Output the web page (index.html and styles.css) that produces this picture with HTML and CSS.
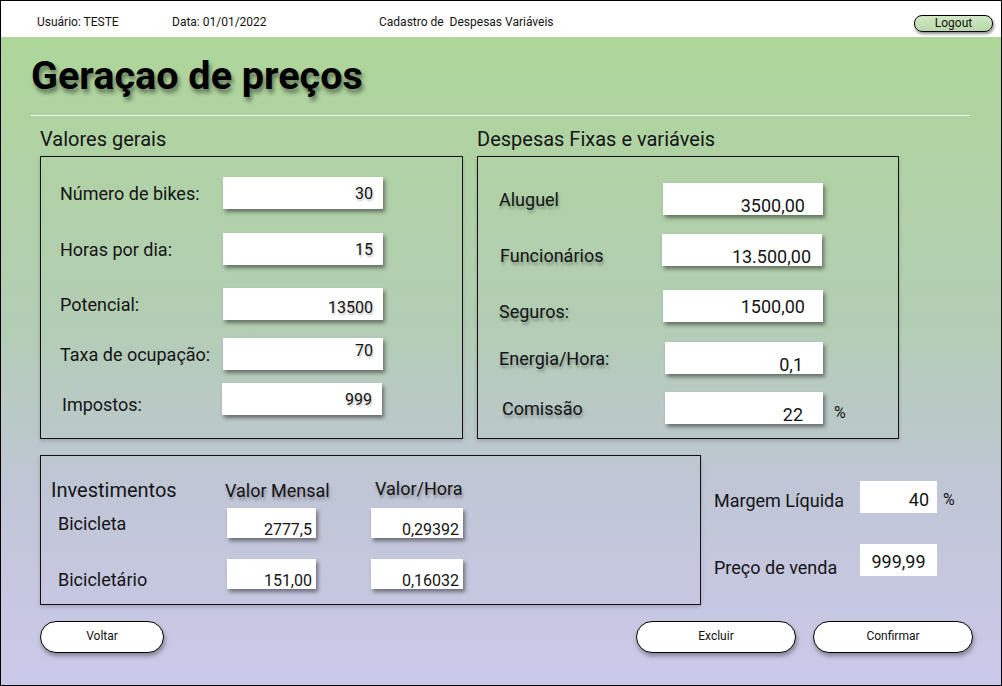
FILE: index.html
```html
<!DOCTYPE html>
<html lang="pt-BR">
<head>
<meta charset="utf-8">
<title>Geração de preços</title>
<link rel="stylesheet" href="styles.css">
</head>
<body>
<div class="app">
  <header class="topbar">
    <span class="user">Usuário: TESTE</span>
    <span class="date">Data: 01/01/2022</span>
    <span class="screen">Cadastro de&nbsp; Despesas Variáveis</span>
    <button class="logout">Logout</button>
  </header>
  <main class="content">
    <h1 class="title">Geraçao de preços</h1>
    <hr class="divider">
    <div class="cols">
      <section class="col col-gerais">
        <h2 class="col-title">Valores gerais</h2>
        <div class="panel panel-gerais">
          <div class="row"><span class="label">Número de bikes:</span><span class="field">30</span></div>
          <div class="row"><span class="label">Horas por dia:</span><span class="field">15</span></div>
          <div class="row"><span class="label">Potencial:</span><span class="field low">13500</span></div>
          <div class="row"><span class="label">Taxa de ocupação:</span><span class="field high">70</span></div>
          <div class="row"><span class="label lower">Impostos:</span><span class="field">999</span></div>
        </div>
      </section>
      <section class="col col-despesas">
        <h2 class="col-title">Despesas Fixas e variáveis</h2>
        <div class="panel panel-despesas">
          <div class="row"><span class="label">Aluguel</span><span class="field">3500,00</span></div>
          <div class="row"><span class="label lower">Funcionários</span><span class="field tight">13.500,00</span></div>
          <div class="row"><span class="label lower">Seguros:</span><span class="field mid">1500,00</span></div>
          <div class="row"><span class="label">Energia/Hora:</span><span class="field">0,1</span></div>
          <div class="row"><span class="label">Comissão</span><span class="field">22</span><span class="unit">%</span></div>
        </div>
      </section>
    </div>
    <div class="bottom">
      <div class="panel invest">
        <div class="invest-head">
          <span class="head-main">Investimentos</span>
          <span class="head-col head-mensal">Valor Mensal</span>
          <span class="head-col head-hora">Valor/Hora</span>
        </div>
        <div class="invest-row first">
          <span class="inv-label">Bicicleta</span>
          <span class="box box-mensal">2777,5</span>
          <span class="box">0,29392</span>
        </div>
        <div class="invest-row second">
          <span class="inv-label lower">Bicicletário</span>
          <span class="box box-mensal">151,00</span>
          <span class="box">0,16032</span>
        </div>
      </div>
      <div class="summary">
        <div class="sum-row"><span class="sum-label">Margem Líquida</span><span class="sum-field right">40</span><span class="sum-unit">%</span></div>
        <div class="sum-row second"><span class="sum-label">Preço de venda</span><span class="sum-field center">999,99</span></div>
      </div>
    </div>
    <div class="actions">
      <button class="btn btn-back">Voltar</button>
      <div class="action-group">
        <button class="btn">Excluir</button>
        <button class="btn">Confirmar</button>
      </div>
    </div>
  </main>
</div>
</body>
</html>
```
FILE: styles.css
```css
* { box-sizing: border-box; }
body {
  margin: 0;
  font-family: Roboto, "Noto Sans", "Liberation Sans", Arial, sans-serif;
  color: #141414;
}
.app {
  width: 1002px;
  height: 686px;
  border: 1px solid #000;
  display: flex;
  flex-direction: column;
  overflow: hidden;
}
.topbar {
  height: 36px;
  flex: none;
  background: #fff;
  display: flex;
  align-items: center;
  padding: 6px 0 0 36px;
  font-size: 12px;
}
.topbar .user { width: 135px; }
.topbar .date { width: 207px; }
.topbar .screen { flex: 1; }
.logout {
  align-self: flex-end;
  margin: 0 8px 5px 0;
  width: 79px;
  height: 17px;
  padding: 0 0 1px;
  border: 1px solid #000;
  border-radius: 8px;
  background: linear-gradient(#d2e8c6, #b9d8a8);
  box-shadow: 1px 2px 3px rgba(0,0,0,.45);
  font: 12px Roboto, "Noto Sans", sans-serif;
  color: #111;
  line-height: 13px;
}
.content {
  flex: 1;
  background: linear-gradient(180deg, #aed699 0%, #b3cdb5 45%, #c0c6d6 70%, #cbc9ea 100%);
  padding: 16px 0 0 30px;
}
.title {
  margin: 0;
  font-size: 39.6px;
  font-weight: 700;
  line-height: 46px;
  color: #000;
  text-shadow: 2px 4px 4px rgba(0,0,0,.45);
}
.divider {
  border: 0;
  height: 1px;
  width: 939px;
  background: #f4f8f0;
  margin: 16px 0 0 0;
}
.cols {
  display: flex;
  gap: 14px;
  margin: 12px 0 0 9px;
}
.col-gerais { width: 423px; }
.col-despesas { width: 422px; }
.col-title {
  margin: 0 0 5px;
  font-size: 20px;
  font-weight: 400;
  line-height: 23px;
}
.panel {
  border: 1px solid #111;
  box-shadow: 0 2px 4px rgba(0,0,0,.18);
}
.panel-gerais, .panel-despesas { height: 283px; }
.row {
  display: flex;
  align-items: center;
  height: 32px;
}
.label { font-size: 18px; }
.label.lower { padding-top: 10px; }
.field {
  width: 160px;
  height: 32px;
  background: #fff;
  box-shadow: 2px 3px 4px rgba(0,0,0,.45);
  display: flex;
  align-items: center;
  justify-content: flex-end;
}
.panel-gerais { padding-left: 19px; }
.panel-gerais .label { width: 163px; }
.panel-gerais .field {
  font-size: 16px;
  padding-right: 10px;
  text-shadow: 1px 2px 2px rgba(0,0,0,.25);
}
.panel-gerais .field.low { padding-top: 6px; }
.panel-gerais .field.high { padding-bottom: 8px; }
.panel-gerais .row:nth-child(1) { margin-top: 20px; }
.panel-gerais .row:nth-child(2) { margin-top: 24px; }
.panel-gerais .row:nth-child(3) { margin-top: 23px; }
.panel-gerais .row:nth-child(4) { margin-top: 18px; }
.panel-gerais .row:nth-child(5) { margin-top: 13px; }
.panel-gerais .row:nth-child(5) .label { padding-left: 2px; }
.panel-gerais .row:nth-child(5) .field { margin-left: -1px; }

.panel-despesas { padding-left: 21px; }
.panel-despesas .label {
  width: 164px;
  text-shadow: 1px 3px 3px rgba(0,0,0,.3);
}
.panel-despesas .field {
  font-size: 18px;
  padding: 12px 18px 0 0;
}
.panel-despesas .field.tight { padding-right: 11px; }
.panel-despesas .field.mid { padding-top: 0; }
.panel-despesas .row:nth-child(1) { margin-top: 26px; }
.panel-despesas .row:nth-child(2) { margin-top: 19px; }
.panel-despesas .row:nth-child(3) { margin-top: 24px; }
.panel-despesas .row:nth-child(4) { margin-top: 20px; }
.panel-despesas .row:nth-child(5) { margin-top: 18px; }
.panel-despesas .row:nth-child(4) .field,
.panel-despesas .row:nth-child(5) .field { width: 158px; margin-left: 2px; padding-right: 20px; }
.panel-despesas .row:nth-child(2) .label { width: 162px; margin-left: 1px; }
.panel-despesas .row:nth-child(5) .label { padding-left: 3px; }
.unit {
  font-size: 16px;
  margin-left: 11px;
  padding-top: 8px;
}

.bottom {
  display: flex;
  margin: 16px 0 0 9px;
}
.invest {
  width: 661px;
  height: 150px;
  padding: 22px 0 0 10px;
}
.invest-head, .invest-row {
  display: grid;
  grid-template-columns: 176px 144px 92px;
  align-items: center;
}
.invest-head { height: 22px; }
.head-main { font-size: 20px; }
.head-col {
  font-size: 18px;
  text-shadow: 1px 3px 3px rgba(0,0,0,.3);
}
.head-mensal { margin-left: -2px; }
.head-hora { padding-left: 4px; margin-top: -3px; }
.invest-row { height: 30px; }
.invest-row.first { margin-top: 8px; }
.invest-row.second { margin-top: 19px; }
.inv-label { font-size: 18px; padding-left: 7px; }
.inv-label.lower { padding-top: 12px; }
.box {
  height: 30px;
  background: #fff;
  box-shadow: 2px 3px 4px rgba(0,0,0,.45);
  display: flex;
  align-items: flex-end;
  justify-content: flex-end;
  padding: 0 4px 0 0;
  font-size: 16px;
  line-height: 16px;
}
.box-mensal { width: 89px; }
.summary {
  margin-left: 13px;
  padding-top: 26px;
}
.sum-row {
  display: flex;
  align-items: center;
  height: 32px;
}
.sum-row.second { margin-top: 31px; }
.sum-label {
  width: 146px;
  font-size: 18px;
  padding-top: 6px;
}
.sum-row.second .sum-label { padding-top: 14px; }
.sum-field {
  width: 77px;
  height: 32px;
  background: #fff;
  display: flex;
  align-items: center;
  font-size: 18px;
}
.sum-field.right { justify-content: flex-end; padding: 4px 8px 0 0; }
.sum-field.center { justify-content: center; padding-top: 3px; }
.sum-unit { font-size: 16px; margin-left: 6px; padding-top: 4px; }

.actions {
  display: flex;
  justify-content: space-between;
  width: 933px;
  margin: 16px 0 0 9px;
}
.action-group {
  display: flex;
  gap: 17px;
}
.btn {
  width: 160px;
  height: 32px;
  border: 1px solid #000;
  border-radius: 16px;
  background: #fff;
  box-shadow: 1px 3px 4px rgba(0,0,0,.35);
  font: 12px Roboto, "Noto Sans", sans-serif;
  color: #111;
  padding: 0 0 2px;
}
.btn-back { width: 124px; }
```
